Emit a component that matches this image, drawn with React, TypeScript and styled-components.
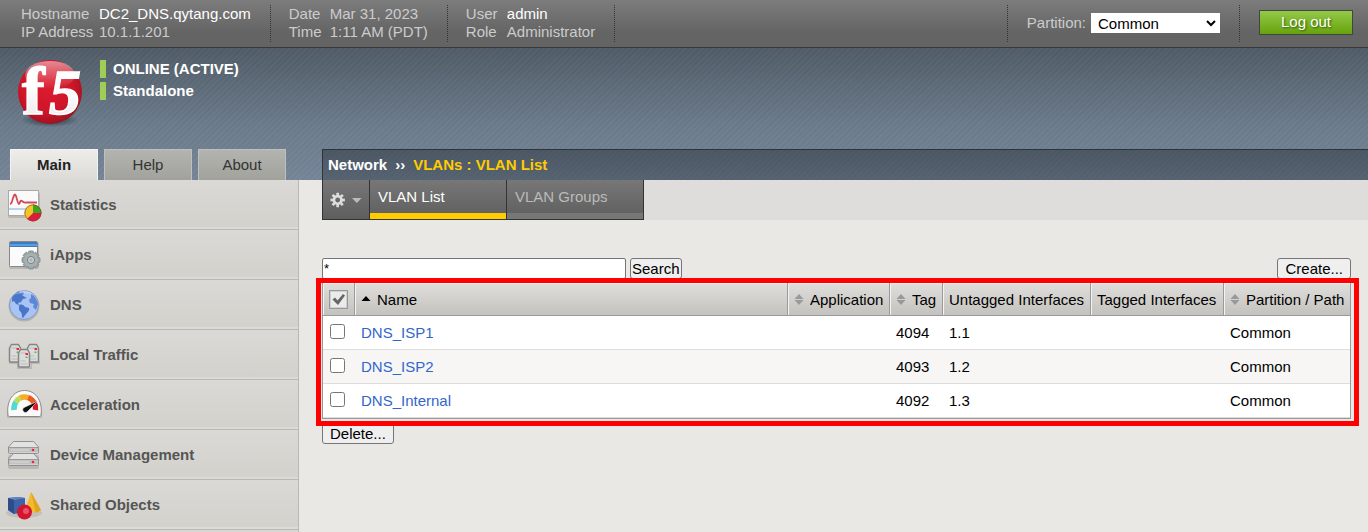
import React from "react";
import styled, { createGlobalStyle } from "styled-components";

const GlobalStyle = createGlobalStyle`
  * { box-sizing: border-box; }
  body {
    margin: 0;
    background: #e9e8e4;
    color: #000;
    font: 15px/18px "Liberation Sans", Arial, sans-serif;
  }
  button, input, select { font: inherit; color: inherit; margin: 0; }
`;

const Page = styled.div`
  display: flex;
  flex-direction: column;
  min-height: 100vh;
`;

const TopBar = styled.header`
  display: flex;
  justify-content: space-between;
  height: 48px;
  padding: 5px 15px 5px 3px;
  border-bottom: 1px solid #393939;
  background: linear-gradient(#7c7c7c, #646464 70%);
  color: #ccc;
`;

const BarGroup = styled.div`
  display: flex;
`;

const InfoList = styled.dl<{ $label: number }>`
  display: grid;
  grid-template-columns: ${(p) => p.$label}px auto;
  align-content: start;
  margin: 0;
  padding: 0 19px 0 18px;
  border-right: 1px dotted #333;
  white-space: nowrap;
`;

const Term = styled.dt``;

const Value = styled.dd<{ $bright?: boolean }>`
  margin: 0;
  color: ${(p) => (p.$bright ? "#fff" : "#ccc")};
`;

const PartitionBox = styled.div`
  display: flex;
  align-items: center;
  gap: 5px;
  padding: 0 19px 2px;
  border: dotted #333;
  border-width: 0 1px;
`;

const PartitionSelect = styled.select`
  width: 129px;
  height: 20px;
  padding: 0 2px;
  border: 1px solid #fff;
  border-radius: 0;
  background: #fff;
  color: #000;
`;

const LogoutButton = styled.button`
  width: 94px;
  height: 25px;
  margin: 5px 0 0 19px;
  padding: 0 0 2px;
  border: 1px solid #444;
  background: linear-gradient(#94c948, #66a30d);
  color: #fff;
  text-shadow: 1px 1px 2px #345800;
`;

const Banner = styled.div`
  background:
    repeating-linear-gradient(135deg, rgba(255, 255, 255, 0.02) 0 2px, rgba(0, 0, 0, 0.02) 2px 4px),
    linear-gradient(#515c67, #6c7c8d 60%, #758698);
`;

const Identity = styled.div`
  display: flex;
  gap: 16px;
  height: 101px;
  padding: 0 16px;
`;

const StatusList = styled.div`
  display: flex;
  flex-direction: column;
  gap: 4px;
  padding-top: 12px;
`;

const Status = styled.div`
  padding-left: 7px;
  border-left: 6px solid #9fce57;
  color: #fff;
  font-weight: bold;
`;

const Columns = styled.div`
  display: grid;
  grid-template-columns: 299px minmax(0, 1fr);
  column-gap: 23px;
`;

const Body = styled(Columns)`
  flex: 1;
`;

const SideTabs = styled.nav`
  display: flex;
  gap: 6px;
  padding-left: 10px;
`;

const SideTab = styled.button<{ $active?: boolean }>`
  width: 88px;
  height: 31px;
  padding: 0;
  border: solid ${(p) => (p.$active ? "#f4f3f1" : "#bfbfbb")};
  border-width: 1px 1px 0;
  background: ${(p) => (p.$active ? "linear-gradient(#eeedea, #dbdad6)" : "linear-gradient(#b3b4af, #a1a29c)")};
  color: ${(p) => (p.$active ? "#222" : "#333")};
  font-weight: ${(p) => (p.$active ? "bold" : "normal")};
`;

const Breadcrumb = styled.div`
  display: flex;
  align-items: center;
  gap: 8px;
  height: 31px;
  padding-left: 5px;
  border: solid #2f343a;
  border-width: 1px 0 0 1px;
  background: linear-gradient(rgba(40, 47, 56, 0.5), rgba(40, 47, 56, 0.4));
  color: #fff;
  font-weight: bold;
`;

const Crumb = styled.span`
  color: #fc0;
`;

const Sidebar = styled.nav`
  border-right: 1px solid #b9b8b5;
  background: #d8d7d3;
`;

const SideLink = styled.a`
  display: flex;
  align-items: center;
  gap: 6px;
  height: 50px;
  padding-left: 6px;
  border-bottom: 1px solid #b9b8b5;
  background: linear-gradient(#dad9d5, #d2d1cc);
  box-shadow: inset 0 -2px #dcdbd7;
  color: #555;
  font-weight: bold;
  text-decoration: none;
`;

const Main = styled.main`
  display: flex;
  flex-direction: column;
`;

const TabBar = styled.nav`
  display: flex;
  height: 40px;
  background: #dedddb;
`;

const MenuButton = styled.button`
  display: flex;
  align-items: center;
  gap: 7px;
  width: 48px;
  padding: 0 7px;
  border: 1px solid #333;
  border-top: 0;
  background: linear-gradient(#777, #5e5e5e);
`;

const Tab = styled.a<{ $active?: boolean }>`
  width: 137px;
  padding: 8px 7px 0 8px;
  border: solid #333;
  border-width: 0 1px 1px 0;
  background: linear-gradient(#777, #5e5e5e);
  box-shadow: inset 0 -6px ${(p) => (p.$active ? "#fc0" : "#777")};
  color: ${(p) => (p.$active ? "#fff" : "#bbb")};
  text-decoration: none;
`;

const Content = styled.div`
  display: flex;
  flex-direction: column;
  align-items: flex-start;
  gap: 4px;
  padding: 38px 17px 24px 0;
`;

const SearchRow = styled.form`
  display: flex;
  gap: 4px;
  width: 100%;
`;

const SearchInput = styled.input`
  width: 304px;
  height: 21px;
  padding: 0 1px;
  border: 1px solid #767676;
  border-radius: 2px;
  background: #fff;
  font-size: 13px;
`;

const PlainButton = styled.button<{ $pad: number; $end?: boolean }>`
  height: 21px;
  margin-left: ${(p) => (p.$end ? "auto" : "0")};
  padding: 0 ${(p) => p.$pad}px;
  border: 1px solid #767676;
  border-radius: 3px;
  background: #efefef;
  color: #000;
`;

const Highlight = styled.div`
  position: relative;
  width: 100%;

  &::after {
    content: "";
    position: absolute;
    inset: -5px -8px -7px -6px;
    border: 5px solid #f00;
    pointer-events: none;
  }
`;

const Table = styled.table`
  width: 100%;
  table-layout: fixed;
  border: solid #999;
  border-width: 0 1px 1px;
  border-spacing: 0;
  background: #fff;
  text-align: left;
  white-space: nowrap;
`;

const Head = styled.th`
  height: 33px;
  padding: 1px 0 0 6px;
  border: solid #999;
  border-width: 0 1px 1px 0;
  background: linear-gradient(#dfdedb, #c3c2be);
  box-shadow: inset 1px 1px #f4f3f1;
  font-weight: normal;

  &:last-child { border-right: 0; }
`;

const HeadLabel = styled.span`
  display: flex;
  align-items: center;
  gap: 5px;
`;

const Row = styled.tr`
  &:nth-child(even) { background: #f7f6f5; }
`;

const Cell = styled.td`
  height: 34px;
  padding: 0 0 0 6px;
  border-bottom: 1px solid #ddd;
`;

const NameLink = styled.a`
  color: #36c;
  text-decoration: none;
`;

const RowCheck = styled.input`
  display: block;
  width: 15px;
  height: 15px;
  margin: 0 0 2px 1px;
`;

const CheckAll = styled.label`
  display: grid;
  width: 19px;
  height: 19px;
  > * { grid-area: 1 / 1; }
`;

const CheckAllInput = styled.input`
  appearance: none;
  width: 19px;
  height: 19px;
  border: 1px solid #999;
  background: #ebebeb;
  box-shadow: inset 0 0 0 1px #d0d0d0;
`;

const CheckMark = styled.svg`
  pointer-events: none;
`;

const Logo = () => (
  <svg width="68" height="90" viewBox="0 -10 68 90" role="img" aria-label="f5">
    <defs>
      <radialGradient id="ball" cx="0.45" cy="0.4" r="0.62">
        <stop offset="0" stopColor="#dc1c30" />
        <stop offset="0.65" stopColor="#cf1529" />
        <stop offset="0.88" stopColor="#b11223" />
        <stop offset="1" stopColor="#8c1620" />
      </radialGradient>
      <linearGradient id="shine" x1="0" y1="0" x2="0" y2="1">
        <stop offset="0" stopColor="#fff" stopOpacity="0.5" />
        <stop offset="1" stopColor="#fff" stopOpacity="0" />
      </linearGradient>
      <linearGradient id="mark" x1="0" y1="0" x2="0" y2="1">
        <stop offset="0.4" stopColor="#fff" />
        <stop offset="1" stopColor="#e9e6e6" />
      </linearGradient>
      <radialGradient id="shade">
        <stop offset="0" stopColor="#222a33" stopOpacity="0.9" />
        <stop offset="1" stopColor="#222a33" stopOpacity="0" />
      </radialGradient>
    </defs>
    <ellipse cx="34" cy="62" rx="29" ry="7" fill="url(#shade)" />
    <circle cx="34" cy="34" r="32" fill="url(#ball)" />
    <ellipse cx="34" cy="17" rx="25" ry="14" fill="url(#shine)" />
    <g fontFamily="Liberation Serif, serif" fontWeight="bold" fill="url(#mark)" stroke="#fff" strokeWidth="1.500">
      <text x="6" y="56" fontSize="68">f</text>
      <text x="33" y="56" fontSize="64" fontStyle="italic">5</text>
    </g>
  </svg>
);

const Icon = ({ children }: { children: React.ReactNode }) => (
  <svg width="38" height="38" viewBox="0 0 38 38" aria-hidden="true">{children}</svg>
);

const teeth = (n: number) => Array.from({ length: n }, (_, i) => (360 / n) * i);

const StatisticsIcon = () => (
  <Icon>
    <rect x="2" y="6" width="32" height="26" rx="2" fill="#777" opacity="0.3" />
    <rect x="2.500" y="4.500" width="30" height="25" fill="#fafafa" stroke="#aaa" />
    <path d="M3 23h29" stroke="#b9d3ea" strokeWidth="2" />
    <path d="M4 18c2 0 2-3 3-6s2-5 3-2 2 8 3 8 1-5 3-3 2 1.500 4 1.500h11" fill="none" stroke="#d2495a" strokeWidth="1.800" />
    <circle cx="27" cy="27" r="8.500" fill="#da1d3c" />
    <path d="M27 27V18.500A8.500 8.500 0 0 1 35.500 27Z" fill="#3aa71c" />
    <path d="M27 27V18.500A8.500 8.500 0 0 0 21 33Z" fill="#f1c62b" />
    <circle cx="27" cy="27" r="8" fill="none" stroke="#7b4a20" strokeOpacity="0.5" />
  </Icon>
);

const AppsIcon = () => (
  <Icon>
    <rect x="3" y="6" width="30" height="27" rx="2" fill="#777" opacity="0.3" />
    <rect x="3.500" y="5.500" width="28" height="25" rx="1" fill="#fbfbfb" stroke="#888" />
    <path d="M4 6h27v5H4z" fill="#397cc2" />
    <path d="M4 8h27v2H4z" fill="#5b9cdc" />
    <g fill="#9ba6a8" stroke="#7d888b" strokeWidth="0.800">
      {teeth(8).map((a) => (
        <rect key={a} x="22.500" y="15" width="5" height="6" rx="1" transform={`rotate(${a} 25 24)`} />
      ))}
    </g>
    <circle cx="25" cy="24" r="7" fill="#a7b1b2" />
    <circle cx="25" cy="24" r="3.600" fill="#c8cecd" stroke="#788386" />
    <circle cx="25" cy="24" r="1.500" fill="#a7b1b2" />
  </Icon>
);

const DnsIcon = () => (
  <Icon>
    <circle cx="18" cy="20" r="15.500" fill="#777" opacity="0.35" />
    <circle cx="18" cy="19" r="14.500" fill="#a9c3f5" stroke="#8a9cc0" />
    <path d="M6 12c2-4 4-6 7-7l1 2 3-1 1 2-2 1 3 2 2 1-4 1-2 3-3 1 1 2-3-1-2-3-2 1z" fill="#4a76ca" />
    <path d="M13 19c3-1 5 0 6 2l4 1c1 2-1 4-3 6l-3 4-1-1c0-4-1-5-3-7z" fill="#4a76ca" />
    <path d="M25 8c4 2 6 6 7 10l-2 6-3-3 1-3-4-1-1-3 2-2z" fill="#5c86d6" />
    <path d="M6 10c5-7 15-8 22-1-7-2-15-2-22 1Z" fill="#fff" opacity="0.25" />
  </Icon>
);

const Server = ({ x, y }: { x: number; y: number }) => (
  <g transform={`translate(${x} ${y})`}>
    <path d="M0 4l2-3.500h7L11 4v13q0 1-1 1H1q-1 0-1-1z" fill="#dcdcdb" stroke="#858585" strokeWidth="1.500" strokeLinejoin="round" />
    <path d="M2 4h6M2 12h5M2 15h7" stroke="#bbb" />
    <rect x="7" y="4" width="2.500" height="2" fill="#ee2340" />
    <rect x="7" y="7.500" width="2" height="1.500" fill="#4ac14a" />
  </g>
);

const TrafficIcon = () => (
  <Icon>
    <path d="M3 25h9v6h13v-6h9v3h-8v5H11v-5H3z" fill="#777" opacity="0.3" />
    <Server x={3.5} y={8} />
    <Server x={21.5} y={8} />
    <Server x={12.5} y={13} />
  </Icon>
);

const AccelerationIcon = () => (
  <Icon>
    <path d="M1 32C0 16 8 6 18.500 6S37 16 36 32z" fill="#777" opacity="0.3" />
    <path d="M2 29C0 14 8 4.500 18.500 4.500S37 14 35 29c0 1-1 1.500-2 1.500H4c-1 0-2-.5-2-1.500z" fill="#fbfbfa" stroke="#888" />
    <g fill="none" strokeWidth="5.500">
      <path d="M8 24a11.500 11.500 0 0 1 2-8" stroke="#52d9d2" />
      <path d="M10 16a11.500 11.500 0 0 1 4-4" stroke="#bedb55" />
      <path d="M14 12a11.500 11.500 0 0 1 8-.5" stroke="#f2ae24" />
      <path d="M22 11.500a11.500 11.500 0 0 1 6 5" stroke="#ed5a20" />
      <path d="M28 16.500a11.500 11.500 0 0 1 1.500 7.500" stroke="#df1728" />
    </g>
    <path d="M32 15l-11 11a2.700 2.700 0 1 1-3-4.500z" fill="#111" stroke="#fff" strokeWidth="0.500" />
  </Icon>
);

const DeviceUnit = ({ y }: { y: number }) => (
  <g transform={`translate(0 ${y})`}>
    <path d="M2.500 6l5-5.500h20L32.500 6v5.500q0 1-1 1h-28q-1 0-1-1z" fill="#e2e2e1" stroke="#919191" strokeLinejoin="round" />
    <path d="M3 6.500h29v5H3z" fill="#c2c2c2" />
    <path d="M3 6.500h29" stroke="#999" />
    <path d="M5 9h18" stroke="#d8d8d8" />
    <circle cx="27" cy="9" r="1.300" fill="#ee2340" />
  </g>
);

const DeviceIcon = () => (
  <Icon>
    <rect x="2" y="19" width="31" height="14" rx="2" fill="#777" opacity="0.3" />
    <DeviceUnit y={17} />
    <DeviceUnit y={5} />
  </Icon>
);

const ObjectsIcon = () => (
  <Icon>
    <ellipse cx="18" cy="27" rx="18" ry="5" fill="#777" opacity="0.2" />
    <path d="M25 6l10 18-5 3-11-3z" fill="#f3ba30" />
    <path d="M25 6l10 18-5 3z" fill="#e0a51f" />
    <path d="M2 12l10-1 7 1v14l-11 2-6-4z" fill="#3f63a6" />
    <path d="M2 12l10-1 7 1-11 2z" fill="#6585c2" />
    <path d="M2 12l6 2v14l-6-4z" fill="#2d4c88" />
    <circle cx="18.500" cy="26" r="7.500" fill="#d3152f" />
    <circle cx="20" cy="25" r="3" fill="#ee6476" opacity="0.8" />
  </Icon>
);

const GearIcon = () => (
  <svg width="16" height="16" viewBox="0 0 16 16" aria-hidden="true">
    <g fill="#ddd">
      {teeth(8).map((a) => (
        <rect key={a} x="6.600" y="0.500" width="2.800" height="4" transform={`rotate(${a} 8 8)`} />
      ))}
    </g>
    <circle cx="8" cy="8" r="3.900" fill="none" stroke="#ddd" strokeWidth="2.800" />
  </svg>
);

const CaretIcon = () => (
  <svg width="10" height="6" viewBox="0 0 10 6" aria-hidden="true">
    <path d="M0 1h10L5 6z" fill="#bbb" />
  </svg>
);

const SortIcon = () => (
  <svg width="11" height="12" viewBox="0 0 11 12" aria-hidden="true">
    <path d="M0.500 5l4.500-5L9.500 5zM0.500 6h9L5 11z" fill="#999" />
  </svg>
);

const SortedIcon = () => (
  <svg width="11" height="12" viewBox="0 0 11 12" aria-hidden="true">
    <path d="M0.500 7L5 2l4.500 5z" fill="#000" />
  </svg>
);

const CheckIcon = () => (
  <CheckMark width="19" height="19" viewBox="0 0 19 19" aria-hidden="true">
    <path d="M3.500 9.500L6 7.500l2.500 3L14 4l2 1.500-7 9.500z" fill="#666" />
  </CheckMark>
);

const sections = [
  { label: "Statistics", Glyph: StatisticsIcon },
  { label: "iApps", Glyph: AppsIcon },
  { label: "DNS", Glyph: DnsIcon },
  { label: "Local Traffic", Glyph: TrafficIcon },
  { label: "Acceleration", Glyph: AccelerationIcon },
  { label: "Device Management", Glyph: DeviceIcon },
  { label: "Shared Objects", Glyph: ObjectsIcon },
];

const vlans = [
  { name: "DNS_ISP1", tag: "4094", untagged: "1.1" },
  { name: "DNS_ISP2", tag: "4093", untagged: "1.2" },
  { name: "DNS_Internal", tag: "4092", untagged: "1.3" },
];

const columns = [
  { label: "Name", width: undefined, icon: <SortedIcon /> },
  { label: "Application", width: 102, icon: <SortIcon /> },
  { label: "Tag", width: 53, icon: <SortIcon /> },
  { label: "Untagged Interfaces", width: 148 },
  { label: "Tagged Interfaces", width: 133 },
  { label: "Partition / Path", width: 126, icon: <SortIcon /> },
];

export default function App() {
  return (
    <Page>
      <GlobalStyle />
      <TopBar>
        <BarGroup>
          <InfoList $label={78}>
            <Term>Hostname</Term>
            <Value $bright>DC2_DNS.qytang.com</Value>
            <Term>IP Address</Term>
            <Value>10.1.1.201</Value>
          </InfoList>
          <InfoList $label={41}>
            <Term>Date</Term>
            <Value>Mar 31, 2023</Value>
            <Term>Time</Term>
            <Value>1:11 AM (PDT)</Value>
          </InfoList>
          <InfoList $label={41}>
            <Term>User</Term>
            <Value $bright>admin</Value>
            <Term>Role</Term>
            <Value>Administrator</Value>
          </InfoList>
        </BarGroup>
        <BarGroup>
          <PartitionBox>
            <label htmlFor="partition">Partition:</label>
            <PartitionSelect id="partition" defaultValue="Common">
              <option>Common</option>
            </PartitionSelect>
          </PartitionBox>
          <LogoutButton type="button">Log out</LogoutButton>
        </BarGroup>
      </TopBar>
      <Banner>
        <Identity>
          <Logo />
          <StatusList>
            <Status>ONLINE (ACTIVE)</Status>
            <Status>Standalone</Status>
          </StatusList>
        </Identity>
        <Columns>
          <SideTabs>
            <SideTab type="button" $active>Main</SideTab>
            <SideTab type="button">Help</SideTab>
            <SideTab type="button">About</SideTab>
          </SideTabs>
          <Breadcrumb>
            <span>Network</span>
            <span>››</span>
            <Crumb>VLANs : VLAN List</Crumb>
          </Breadcrumb>
        </Columns>
      </Banner>
      <Body>
        <Sidebar>
          {sections.map(({ label, Glyph }) => (
            <SideLink key={label} href="#">
              <Glyph />
              {label}
            </SideLink>
          ))}
        </Sidebar>
        <Main>
          <TabBar>
            <MenuButton type="button" aria-label="Options">
              <GearIcon />
              <CaretIcon />
            </MenuButton>
            <Tab href="#" $active>VLAN List</Tab>
            <Tab href="#">VLAN Groups</Tab>
          </TabBar>
          <Content>
            <SearchRow onSubmit={(e) => e.preventDefault()}>
              <SearchInput type="text" defaultValue="*" aria-label="Search" />
              <PlainButton $pad={1}>Search</PlainButton>
              <PlainButton type="button" $pad={7} $end>Create...</PlainButton>
            </SearchRow>
            <Highlight>
              <Table>
                <colgroup>
                  <col width={32} />
                  {columns.map((c) => (
                    <col key={c.label} width={c.width} />
                  ))}
                </colgroup>
                <thead>
                  <tr>
                    <Head>
                      <CheckAll>
                        <CheckAllInput type="checkbox" defaultChecked aria-label="Select all" />
                        <CheckIcon />
                      </CheckAll>
                    </Head>
                    {columns.map((c) => (
                      <Head key={c.label} scope="col">
                        <HeadLabel>
                          {c.icon}
                          {c.label}
                        </HeadLabel>
                      </Head>
                    ))}
                  </tr>
                </thead>
                <tbody>
                  {vlans.map((v) => (
                    <Row key={v.name}>
                      <Cell>
                        <RowCheck type="checkbox" aria-label={v.name} />
                      </Cell>
                      <Cell>
                        <NameLink href="#">{v.name}</NameLink>
                      </Cell>
                      <Cell />
                      <Cell>{v.tag}</Cell>
                      <Cell>{v.untagged}</Cell>
                      <Cell />
                      <Cell>Common</Cell>
                    </Row>
                  ))}
                </tbody>
              </Table>
            </Highlight>
            <PlainButton type="button" $pad={7}>Delete...</PlainButton>
          </Content>
        </Main>
      </Body>
    </Page>
  );
}
